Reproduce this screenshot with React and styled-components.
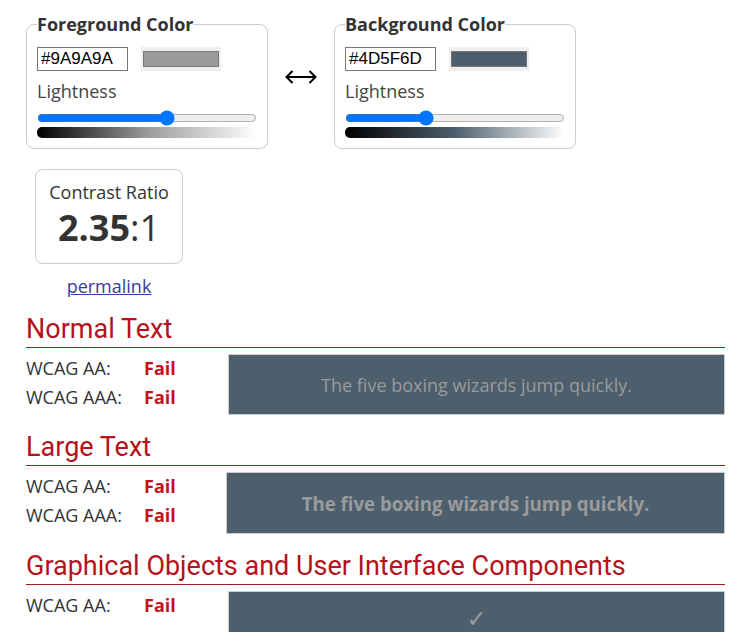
import React from 'react'
import styled, { createGlobalStyle } from 'styled-components'

const GlobalStyle = createGlobalStyle`
    body {
        margin: 0;
        font-family: "Open Sans", "Liberation Sans", sans-serif;
        color: #333;
        background: #fff;
    }
`

const Page = styled.div`
    width: 699px;
    padding: 13px 0 40px 26px;
`

const TopRow = styled.div`
    display: flex;
    align-items: center;
`

const ColorFieldset = styled.fieldset`
    margin: 0;
    width: 242px;
    box-sizing: border-box;
    padding: 0 10px 10px;
    border: 1px solid #ccc;
    border-radius: 8px;
`

const Legend = styled.legend`
    padding: 0;
    font-size: 18px;
    line-height: 22px;
    font-weight: 700;
    color: #333;
`

const FieldRow = styled.div`
    display: flex;
    align-items: center;
    gap: 13px;
    margin-top: 12px;
`

const HexInput = styled.input`
    width: 91px;
    height: 24px;
    box-sizing: border-box;
    border: 1px solid #767676;
    padding: 1px 3px;
    margin: 0;
    font: 17px "Liberation Sans", Arial, sans-serif;
    color: #000;
`

const Swatch = styled.div`
    width: 80px;
    height: 24px;
    box-sizing: border-box;
    padding: 4px 2px;
    background: #efefef;
`

const SwatchColor = styled.div`
    height: 100%;
    box-sizing: border-box;
    border: 1px solid #777;
    background: ${props => props.color};
`

const FieldLabel = styled.div`
    margin-top: 8px;
    font-size: 18px;
    line-height: 24px;
    color: #444;
`

const Slider = styled.input`
    display: block;
    width: 220px;
    margin: 7px 0 0;
`

const Gradient = styled.div`
    width: 220px;
    height: 11px;
    margin-top: 1px;
    border-radius: 5px;
    background: linear-gradient(to right, #000, ${props => props.color}, #fff);
`

const Swap = styled.div`
    width: 66px;
    margin-top: -8px;
    display: flex;
    justify-content: center;
    color: #000;
`

const ContrastColumn = styled.div`
    width: 148px;
    margin: 20px 0 0 9px;
    display: flex;
    flex-direction: column;
    align-items: center;
`

const ContrastBox = styled.div`
    width: 148px;
    height: 95px;
    box-sizing: border-box;
    border: 1px solid #ccc;
    border-radius: 8px;
    padding-top: 10px;
    text-align: center;
`

const ContrastLabel = styled.div`
    font-size: 18px;
    line-height: 24px;
`

const Ratio = styled.div`
    font-size: 36px;
    line-height: 48px;
    color: #333;
    b { font-weight: 700; }
`

const Permalink = styled.a`
    margin-top: 10px;
    font-size: 18px;
    line-height: 24px;
    color: #3a3a9e;
`

const Section = styled.section`
    margin-top: ${props => props.first ? '16px' : '17px'};
`

const Heading = styled.h2`
    margin: 0;
    padding-bottom: 2px;
    font-family: Roboto, "Liberation Sans", sans-serif;
    font-size: 27px;
    line-height: 31px;
    font-weight: 400;
    color: #b5121b;
    border-bottom: 1px solid #a8191e;
`

const ResultRow = styled.div`
    display: flex;
    margin-top: 6px;
`

const Ratings = styled.div`
    width: ${props => props.width}px;
    flex-shrink: 0;
`

const RatingRow = styled.div`
    display: flex;
    font-size: 18px;
    line-height: 29px;
    color: #333;
`

const RatingLabel = styled.span`
    width: 118px;
`

const Fail = styled.span`
    font-weight: 700;
    color: #c4101b;
`

const Sample = styled.div`
    flex: 1;
    height: ${props => props.height}px;
    box-sizing: border-box;
    border: 1px solid #ccc;
    background: #4d5f6d;
    color: #9a9a9a;
    display: flex;
    align-items: center;
    justify-content: center;
    font-size: ${props => props.large ? '18.66px' : '18px'};
    font-weight: ${props => props.large ? 700 : 400};
`

const Check = styled.span`
    font-family: "DejaVu Sans", sans-serif;
    font-size: 24px;
    margin-top: -6px;
`

const SwapIcon = () => (
    <svg width="32" height="14" viewBox="0 0 32 14" fill="none" stroke="currentColor" strokeWidth="2">
        <path d="M1.5 7H30.5" />
        <path d="M7.5 1L1.5 7L7.5 13" />
        <path d="M24.5 1L30.5 7L24.5 13" />
    </svg>
)

const ColorPicker = ({ title, hex, lightness }) => (
    <ColorFieldset>
        <Legend>{title}</Legend>
        <FieldRow>
            <HexInput type="text" defaultValue={hex} />
            <Swatch><SwatchColor color={hex} /></Swatch>
        </FieldRow>
        <FieldLabel>Lightness</FieldLabel>
        <Slider type="range" min="0" max="100" defaultValue={lightness} />
        <Gradient color={hex} />
    </ColorFieldset>
)

const Results = ({ levels, width }) => (
    <Ratings width={width}>
        {levels.map(level => (
            <RatingRow key={level}>
                <RatingLabel>{level}:</RatingLabel>
                <Fail>Fail</Fail>
            </RatingRow>
        ))}
    </Ratings>
)

const App = () => {
    return (
        <Page>
            <GlobalStyle />
            <TopRow>
                <ColorPicker title="Foreground Color" hex="#9A9A9A" lightness={60} />
                <Swap><SwapIcon /></Swap>
                <ColorPicker title="Background Color" hex="#4D5F6D" lightness={36} />
            </TopRow>

            <ContrastColumn>
                <ContrastBox>
                    <ContrastLabel>Contrast Ratio</ContrastLabel>
                    <Ratio><b>2.35</b>:1</Ratio>
                </ContrastBox>
                <Permalink href="#">permalink</Permalink>
            </ContrastColumn>

            <Section first>
                <Heading>Normal Text</Heading>
                <ResultRow>
                    <Results levels={['WCAG AA', 'WCAG AAA']} width={202} />
                    <Sample height={61}>The five boxing wizards jump quickly.</Sample>
                </ResultRow>
            </Section>

            <Section>
                <Heading>Large Text</Heading>
                <ResultRow>
                    <Results levels={['WCAG AA', 'WCAG AAA']} width={200} />
                    <Sample height={62} large>The five boxing wizards jump quickly.</Sample>
                </ResultRow>
            </Section>

            <Section>
                <Heading>Graphical Objects and User Interface Components</Heading>
                <ResultRow>
                    <Results levels={['WCAG AA']} width={202} />
                    <Sample height={61}><Check>✓</Check></Sample>
                </ResultRow>
            </Section>
        </Page>
    )
}

export default App
